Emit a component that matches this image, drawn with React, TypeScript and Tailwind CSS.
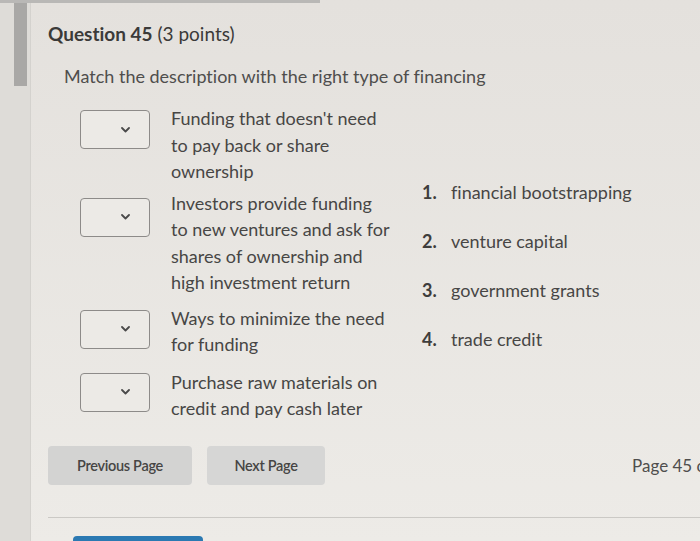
import React from "react";

const rows = [
  { lines: ["Funding that doesn't need", "to pay back or share", "ownership"], top: "mt-0", drop: "mt-[5px]" },
  { lines: ["Investors provide funding", "to new ventures and ask for", "shares of ownership and", "high investment return"], top: "mt-[5px]", drop: "mt-[8px]" },
  { lines: ["Ways to minimize the need", "for funding"], top: "mt-[9px]", drop: "mt-[5px]" },
  { lines: ["Purchase raw materials on", "credit and pay cash later"], top: "mt-[11px]", drop: "mt-[4px]" },
];

const choices = ["financial bootstrapping", "venture capital", "government grants", "trade credit"];

function Dropdown({ className }: { className: string }) {
  return (
    <div
      className={`flex h-[39px] w-[70px] shrink-0 items-center justify-end rounded-[4px] border border-[#8d8b89] bg-[#eceae6] pr-[19px] ${className}`}
    >
      <svg width="9" height="6" viewBox="0 0 9 6" fill="none">
        <path d="M1 1l3.5 3.5L8 1" stroke="#4a4a4a" strokeWidth="1.8" strokeLinecap="round" strokeLinejoin="round" />
      </svg>
    </div>
  );
}

export default function App() {
  return (
    <div
      className="relative flex h-[541px] w-[700px] overflow-hidden bg-gradient-to-b from-[#e4e1dd] to-[#edebe7] text-[#4b4a49] [font-variant-ligatures:none]"
      style={{ fontFamily: "Lato, 'Open Sans', sans-serif" }}
    >
      <div className="absolute left-0 top-0 h-[3px] w-[320px] bg-[#b9b8b6]" />

      <div className="flex w-[31px] shrink-0 border-r border-[#d4d2ce] bg-[#dedcd8] pl-[14px]">
        <div className="h-[86px] w-[13px] bg-[#a9a8a6]" />
      </div>

      <div className="flex flex-1 flex-col pl-[17px]">
        <h1 className="mt-[22px] text-[19px] leading-[24px] text-[#3b3a39]">
          <span className="font-bold">Question 45</span> (3 points)
        </h1>
        <p className="mt-[18px] pl-[16px] text-[18px] leading-[24px] text-[#4f4e4d]">
          Match the description with the right type of financing
        </p>

        <div className="mt-[17px] flex">
          <div className="flex w-[374px] flex-col pl-[32px]">
            {rows.map((r, i) => (
              <div key={i} className={`flex items-start ${r.top}`}>
                <Dropdown className={r.drop} />
                <div className="ml-[21px] text-[18px] leading-[26.5px] text-[#474645]">
                  {r.lines.map((l) => (
                    <div key={l} className="whitespace-nowrap">
                      {l}
                    </div>
                  ))}
                </div>
              </div>
            ))}
          </div>

          <ol className="mt-[74px] flex flex-col gap-[23px] text-[18px] leading-[26px] text-[#474645]">
            {choices.map((c, i) => (
              <li key={c} className="flex">
                <span className="w-[29px] font-bold text-[#3e3d3c]">{i + 1}.</span>
                <span>{c}</span>
              </li>
            ))}
          </ol>
        </div>

        <div className="mt-[auto] flex items-center pb-[56px]">
          <button className="h-[39px] w-[144px] rounded-[4px] bg-[#d3d3d2] text-[14.5px] font-semibold tracking-[-0.3px] text-[#464544]">
            Previous Page
          </button>
          <button className="ml-[15px] h-[39px] w-[118px] rounded-[4px] bg-[#d6d6d5] text-[14.5px] font-semibold tracking-[-0.3px] text-[#464544]">
            Next Page
          </button>
          <span className="ml-auto mr-[-12px] whitespace-nowrap text-[17px] text-[#4f4e4d]">Page 45 of</span>
        </div>

        <div className="absolute bottom-[23px] left-[48px] right-0 h-px bg-[#cbc9c5]" />
        <div className="absolute bottom-0 left-[73px] h-[5px] w-[130px] rounded-t-[4px] bg-[#2b79b2]" />
      </div>
    </div>
  );
}
